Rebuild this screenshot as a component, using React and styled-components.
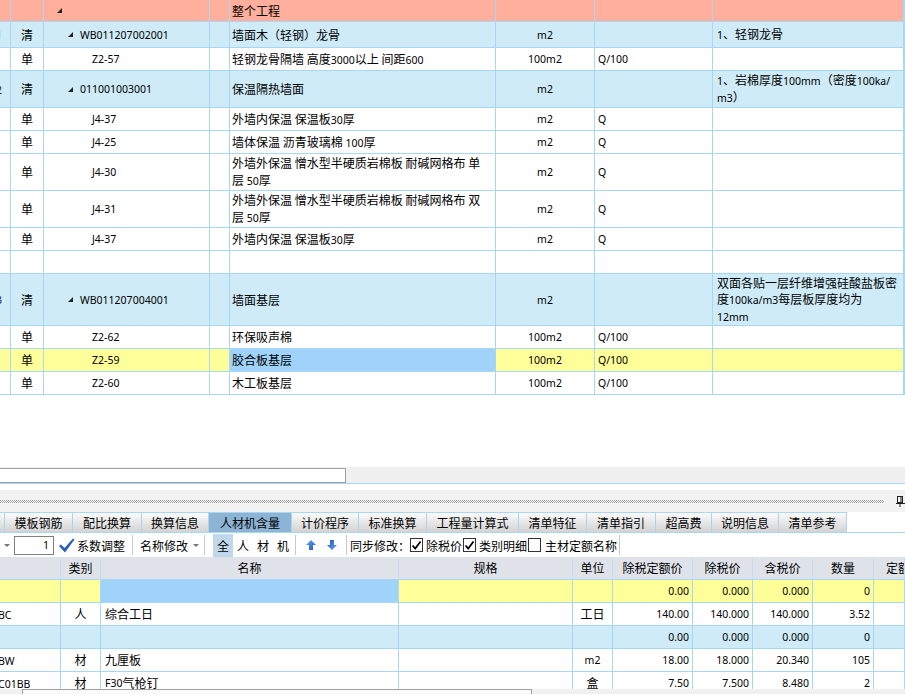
import React from 'react';
import styled, { createGlobalStyle } from 'styled-components';

const C = {
  line: '#a8d6f5',
  salmon: '#ffaf9b',
  blue: '#cfebf7',
  yellow: '#ffff99',
  sel: '#9fd3fa',
  white: '#ffffff',
};

const Global = createGlobalStyle`
  html, body { margin: 0; padding: 0; background: #fff; overflow: hidden; }
  body {
    font-family: "Noto Sans CJK SC", "Noto Sans", sans-serif;
    font-size: 12px;
    color: #000;
  }
  * { box-sizing: border-box; }
`;

const Lat = styled.span`
  font-family: "Noto Sans", "Noto Sans CJK SC", sans-serif;
  font-size: 10.5px;
`;

function T({ children }) {
  const s = String(children ?? '');
  const parts = s.split(/([\x20-\x7E]+)/).filter(Boolean);
  return parts.map((p, i) =>
    /^[\x20-\x7E]+$/.test(p) ? <Lat key={i}>{p}</Lat> : <React.Fragment key={i}>{p}</React.Fragment>
  );
}

function Lines({ v }) {
  if (!v) return null;
  const arr = Array.isArray(v) ? v : [v];
  return arr.map((l, i) => (
    <React.Fragment key={i}>
      {i > 0 && <br />}
      <T>{l}</T>
    </React.Fragment>
  ));
}

const Page = styled.div`
  width: 905px;
  height: 695px;
  display: flex;
  flex-direction: column;
  overflow: hidden;
`;

/* ---------- top grid ---------- */
const TopPane = styled.div`
  height: 467px;
  display: flex;
  flex-direction: column;
  background: #fff;
  overflow: hidden;
`;

const GridRow = styled.div`
  display: grid;
  grid-template-columns: ${(p) => p.$cols};
  height: ${(p) => p.$h}px;
  background: ${(p) => p.$bg || '#fff'};
  flex-shrink: 0;
`;

const Cell = styled.div`
  border-right: 1px solid ${C.line};
  border-bottom: 1px solid ${C.line};
  display: flex;
  align-items: center;
  justify-content: ${(p) => p.$justify || 'flex-start'};
  padding: 0 ${(p) => p.$pr ?? 0}px 0 ${(p) => p.$pl ?? 0}px;
  overflow: hidden;
  white-space: nowrap;
  line-height: 16px;
  background: ${(p) => p.$bg || 'transparent'};
`;

const Block = styled.div`
  line-height: 16px;
`;

const NumText = styled.span`
  margin-left: -4px;
  color: #1a1a60;
`;

const TreeMark = styled.svg`
  width: 5px;
  height: 5px;
  margin-right: 7px;
  flex-shrink: 0;
`;

const Mark = () => (
  <TreeMark viewBox="0 0 5 5">
    <polygon points="5,0 5,5 0,5" fill="#222" />
  </TreeMark>
);

const TOP_COLS = '11px 33px 166px 20px 266px 99px 118px 191px 1fr';
const treePad = { 0: 13, 1: 24, 2: 48 };

const topRows = [
  { h: 22, bg: C.salmon, level: 0, tree: true, name: '整个工程' },
  { h: 26, bg: C.blue, num: '1', type: '清', code: 'WB011207002001', level: 1, tree: true, name: '墙面木（轻钢）龙骨', unit: 'm2', feat: '1、轻钢龙骨' },
  { h: 23, type: '单', code: 'Z2-57', level: 2, name: '轻钢龙骨隔墙 高度3000以上 间距600', unit: '100m2', expr: 'Q/100' },
  { h: 37, bg: C.blue, num: '2', type: '清', code: '011001003001', level: 1, tree: true, name: '保温隔热墙面', unit: 'm2', feat: ['1、岩棉厚度100mm（密度100ka/', 'm3）'] },
  { h: 23, type: '单', code: 'J4-37', level: 2, name: '外墙内保温 保温板30厚', unit: 'm2', expr: 'Q' },
  { h: 23, type: '单', code: 'J4-25', level: 2, name: '墙体保温 沥青玻璃棉 100厚', unit: 'm2', expr: 'Q' },
  { h: 37, type: '单', code: 'J4-30', level: 2, name: ['外墙外保温 憎水型半硬质岩棉板 耐碱网格布 单', '层 50厚'], unit: 'm2', expr: 'Q' },
  { h: 37, type: '单', code: 'J4-31', level: 2, name: ['外墙外保温 憎水型半硬质岩棉板 耐碱网格布 双', '层 50厚'], unit: 'm2', expr: 'Q' },
  { h: 23, type: '单', code: 'J4-37', level: 2, name: '外墙内保温 保温板30厚', unit: 'm2', expr: 'Q' },
  { h: 23, level: 2 },
  { h: 52, bg: C.blue, num: '3', type: '清', code: 'WB011207004001', level: 1, tree: true, name: '墙面基层', unit: 'm2', feat: ['双面各贴一层纤维增强硅酸盐板密', '度100ka/m3每层板厚度均为', '12mm'] },
  { h: 23, type: '单', code: 'Z2-62', level: 2, name: '环保吸声棉', unit: '100m2', expr: 'Q/100' },
  { h: 23, bg: C.yellow, sel: true, type: '单', code: 'Z2-59', level: 2, name: '胶合板基层', unit: '100m2', expr: 'Q/100' },
  { h: 23, type: '单', code: 'Z2-60', level: 2, name: '木工板基层', unit: '100m2', expr: 'Q/100' },
];

function TopRow({ r }) {
  return (
    <GridRow $cols={TOP_COLS} $h={r.h} $bg={r.bg}>
      <Cell>{r.num && <NumText><T>{r.num}</T></NumText>}</Cell>
      <Cell $justify="center">{r.type}</Cell>
      <Cell $pl={treePad[r.level]}>
        {r.tree && <Mark />}
        {r.code && <T>{r.code}</T>}
      </Cell>
      <Cell />
      <Cell $pl={2} $bg={r.sel ? C.sel : undefined}>
        <Block><Lines v={r.name} /></Block>
      </Cell>
      <Cell $justify="center"><T>{r.unit}</T></Cell>
      <Cell $pl={3}><T>{r.expr}</T></Cell>
      <Cell $pl={4}>
        <Block><Lines v={r.feat} /></Block>
      </Cell>
      <Cell />
    </GridRow>
  );
}

/* ---------- scroll + splitter ---------- */
const HScroll = styled.div`
  height: 17px;
  background: #f0f0f0;
  border-bottom: 1px solid ${C.line};
  padding-top: 1px;
  display: flex;
`;

const Thumb = styled.div`
  width: ${(p) => p.$w}px;
  margin-left: ${(p) => p.$ml || 0}px;
  height: ${(p) => p.$h}px;
  background: #fff;
  border: 1px solid #a0a0a0;
  border-left: ${(p) => (p.$noLeft ? 'none' : '1px solid #a0a0a0')};
`;

const Gap = styled.div`
  height: ${(p) => p.$h}px;
  background: #fff;
`;

const Splitter = styled.div`
  height: 22px;
  background: #f2f2f2;
  display: flex;
  align-items: center;
  padding-right: 0;
`;

const Dots = styled.div`
  flex: 1;
  height: 3px;
  margin-right: 12px;
  background-image:
    repeating-linear-gradient(90deg, #a8a8a8 0 1px, transparent 1px 2px),
    repeating-linear-gradient(90deg, transparent 0 1px, #a8a8a8 1px 2px),
    repeating-linear-gradient(90deg, #a8a8a8 0 1px, transparent 1px 2px);
  background-size: 100% 1px;
  background-position: 0 0, 0 1px, 0 2px;
  background-repeat: no-repeat;
`;

const PinSvg = styled.svg`
  width: 9px;
  height: 11px;
  margin-right: 0;
  flex-shrink: 0;
`;

const Pin = () => (
  <PinSvg viewBox="0 0 9 11">
    <rect x="1.5" y="0.5" width="5" height="6" fill="none" stroke="#222" />
    <line x1="5" y1="1" x2="5" y2="6" stroke="#222" />
    <line x1="0" y1="7.5" x2="9" y2="7.5" stroke="#222" />
    <line x1="4" y1="8" x2="4" y2="11" stroke="#222" />
  </PinSvg>
);

/* ---------- tabs ---------- */
const TabBar = styled.div`
  height: 21px;
  display: flex;
  background: #fff;
  border-bottom: 1px solid ${C.line};
`;

const Tab = styled.div`
  width: ${(p) => p.$w}px;
  height: 20px;
  flex-shrink: 0;
  display: flex;
  align-items: center;
  justify-content: center;
  border-top: 1px solid ${C.line};
  border-right: 1px solid ${C.line};
  background: ${(p) => (p.$active ? '#8db4d4' : 'linear-gradient(#fbfbfb, #d3d3d3)')};
  white-space: nowrap;
  overflow: hidden;
`;

const tabs = [
  ['', 5],
  ['模板钢筋', 68],
  ['配比换算', 69],
  ['换算信息', 67],
  ['人材机含量', 83, true],
  ['计价程序', 67],
  ['标准换算', 68],
  ['工程量计算式', 92],
  ['清单特征', 68],
  ['清单指引', 69],
  ['超高费', 56],
  ['说明信息', 67],
  ['清单参考', 68],
];

/* ---------- toolbar ---------- */
const Toolbar = styled.div`
  height: 24px;
  display: flex;
  align-items: center;
  background: #fff;
  white-space: nowrap;
`;

const Item = styled.div`
  margin-left: ${(p) => p.$ml || 0}px;
  flex-shrink: 0;
  display: flex;
  align-items: center;
`;

const Caret = styled.div`
  margin-left: ${(p) => p.$ml || 0}px;
  width: 0;
  height: 0;
  border-left: 3px solid transparent;
  border-right: 3px solid transparent;
  border-top: 3px solid #777;
  flex-shrink: 0;
`;

const NumBox = styled.div`
  margin-left: ${(p) => p.$ml || 0}px;
  width: 40px;
  height: 19px;
  border: 1px solid #7f7f7f;
  display: flex;
  align-items: center;
  justify-content: flex-end;
  padding-right: 4px;
  flex-shrink: 0;
`;

const Sep = styled.div`
  margin-left: ${(p) => p.$ml || 0}px;
  width: 1px;
  height: 20px;
  background: #c9c9c9;
  flex-shrink: 0;
`;

const FBtn = styled.div`
  width: 20px;
  height: 23px;
  display: flex;
  align-items: center;
  justify-content: center;
  background: ${(p) => (p.$active ? '#c0d8ec' : 'transparent')};
  flex-shrink: 0;
`;

const Box = styled.div`
  margin-left: ${(p) => p.$ml || 0}px;
  width: 13px;
  height: 14px;
  border: 1px solid #333;
  background: #fff;
  flex-shrink: 0;
  display: flex;
  align-items: center;
  justify-content: center;
`;

const Svg = styled.svg`
  margin-left: ${(p) => p.$ml || 0}px;
  flex-shrink: 0;
  display: block;
`;

const Check = ({ on, ml }) => (
  <Box $ml={ml}>
    {on && (
      <svg width="11" height="11" viewBox="0 0 11 11">
        <path d="M1.5 5.5 L4.2 8.5 L9.5 1.5" fill="none" stroke="#000" strokeWidth="1.8" />
      </svg>
    )}
  </Box>
);

const BlueCheck = ({ ml }) => (
  <Svg $ml={ml} width="17" height="17" viewBox="0 0 17 17">
    <path d="M1 9 L3 7.5 L6.5 11 L15 1.5 L16.5 2.5 L7 15.5 Z" fill="#2a5fb8" />
  </Svg>
);

const Arrow = ({ ml, down }) => (
  <Svg $ml={ml} width="10" height="10" viewBox="0 0 10 10" style={down ? { transform: 'rotate(180deg)' } : undefined}>
    <defs>
      <linearGradient id={down ? 'ad' : 'au'} x1="0" y1="0" x2="1" y2="1">
        <stop offset="0" stopColor="#6aa4f0" />
        <stop offset="1" stopColor="#1d55c0" />
      </linearGradient>
    </defs>
    <polygon points="5,0 10,5 7,5 7,10 3,10 3,5 0,5" fill={`url(#${down ? 'ad' : 'au'})`} />
  </Svg>
);

/* ---------- bottom grid ---------- */
const BottomPane = styled.div`
  height: 132px;
  overflow: hidden;
  display: flex;
  flex-direction: column;
`;

const HeadCell = styled(Cell)`
  background: #dfe3e9;
  border-right-color: #c6dcef;
  border-bottom-color: ${C.line};
`;

const BOT_COLS = '61px 40px 298px 174px 40px 80px 60px 60px 61px 1fr';

const botRows = [
  { bg: C.yellow, sel: true, cells: ['', '', '', '', '', '0.00', '0.000', '0.000', '0', ''] },
  { cells: ['BC', '人', '综合工日', '', '工日', '140.00', '140.000', '140.000', '3.52', ''] },
  { bg: C.blue, cells: ['', '', '', '', '', '0.00', '0.000', '0.000', '0', ''] },
  { cells: ['BW', '材', '九厘板', '', 'm2', '18.00', '18.000', '20.340', '105', ''] },
  { cells: ['C01BB', '材', 'F30气枪钉', '', '盒', '7.50', '7.500', '8.480', '2', ''] },
];

const CodeText = styled.span`
  margin-left: -2px;
`;

function BotRow({ r }) {
  const c = r.cells;
  return (
    <GridRow $cols={BOT_COLS} $h={23} $bg={r.bg}>
      <Cell><CodeText><T>{c[0]}</T></CodeText></Cell>
      <Cell $justify="center">{c[1]}</Cell>
      <Cell $pl={4} $bg={r.sel ? C.sel : undefined}><T>{c[2]}</T></Cell>
      <Cell $pl={4}><T>{c[3]}</T></Cell>
      <Cell $justify="center"><T>{c[4]}</T></Cell>
      {c.slice(5, 9).map((v, i) => (
        <Cell key={i} $justify="flex-end" $pr={3}><T>{v}</T></Cell>
      ))}
      <Cell />
    </GridRow>
  );
}

const BScroll = styled.div`
  height: 5px;
  background: #f0f0f0;
  display: flex;
  align-items: flex-start;
`;

const BThumb = styled.div`
  margin-left: ${(p) => p.$ml}px;
  width: ${(p) => p.$w}px;
  height: 5px;
  border-top: 1px solid #a0a0a0;
  border-left: 1px solid #a0a0a0;
  border-right: 1px solid #a0a0a0;
  background: #fafafa;
`;

export default function App() {
  return (
    <Page>
      <Global />
      <TopPane>
        {topRows.map((r, i) => (
          <TopRow key={i} r={r} />
        ))}
      </TopPane>
      <HScroll>
        <Thumb $w={346} $h={15} $noLeft />
      </HScroll>
      <Gap $h={6} />
      <Splitter>
        <Dots />
        <Pin />
      </Splitter>
      <TabBar>
        {tabs.map(([t, w, a], i) => (
          <Tab key={i} $w={w} $active={a}>{t}</Tab>
        ))}
      </TabBar>
      <Toolbar>
        <Caret $ml={4} />
        <NumBox $ml={4}><Lat>1</Lat></NumBox>
        <BlueCheck ml={4} />
        <Item $ml={2}>系数调整</Item>
        <Sep $ml={7} />
        <Item $ml={7}>名称修改</Item>
        <Caret $ml={5} />
        <Sep $ml={5} />
        <Item $ml={8}>
          <FBtn $active>全</FBtn>
          <FBtn>人</FBtn>
          <FBtn>材</FBtn>
          <FBtn>机</FBtn>
        </Item>
        <Sep $ml={2} />
        <Arrow ml={10} />
        <Arrow ml={11} down />
        <Sep $ml={9} />
        <Item $ml={3}>同步修改：</Item>
        <Check on ml={0} />
        <Item $ml={3}>除税价</Item>
        <Check on ml={1} />
        <Item $ml={3}>类别明细</Item>
        <Check ml={1} />
        <Item $ml={4}>主材定额名称</Item>
        <Sep $ml={2} />
      </Toolbar>
      <BottomPane>
        <GridRow $cols={BOT_COLS} $h={23}>
          <HeadCell />
          <HeadCell $justify="center">类别</HeadCell>
          <HeadCell $justify="center">名称</HeadCell>
          <HeadCell $justify="center">规格</HeadCell>
          <HeadCell $justify="center">单位</HeadCell>
          <HeadCell $justify="center">除税定额价</HeadCell>
          <HeadCell $justify="center">除税价</HeadCell>
          <HeadCell $justify="center">含税价</HeadCell>
          <HeadCell $justify="center">数量</HeadCell>
          <HeadCell $pl={12}>定额价</HeadCell>
        </GridRow>
        {botRows.map((r, i) => (
          <BotRow key={i} r={r} />
        ))}
      </BottomPane>
      <BScroll>
        <BThumb $ml={22} $w={510} />
      </BScroll>
    </Page>
  );
}
